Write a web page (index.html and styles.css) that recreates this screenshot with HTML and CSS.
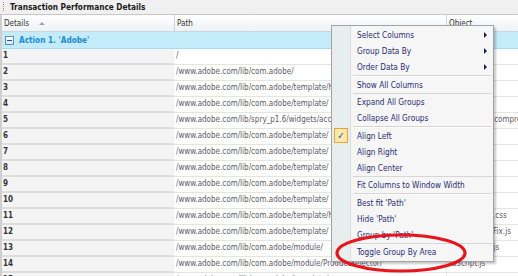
FILE: index.html
```html
<!DOCTYPE html>
<html>
<head>
<meta charset="utf-8">
<link rel="stylesheet" href="styles.css">
</head>
<body>
<div class="panel">
  <div class="titlebar"><span class="grip"></span><span class="title">Transaction Performance Details</span></div>
  <div class="grid">
    <div class="row hdr">
      <div class="c1">Details <span class="sort"></span></div>
      <div class="c2">Path</div>
      <div class="c3">Object</div>
    </div>
    <div class="group"><span class="minus"></span><span class="gtext">Action 1. 'Adobe'</span></div>
    <div class="row"><div class="c1">1</div><div class="c2">/</div><div class="c3"></div></div>
    <div class="row"><div class="c1">2</div><div class="c2">/www.adobe.com/lib/com.adobe/</div><div class="c3"></div></div>
    <div class="row"><div class="c1">3</div><div class="c2">/www.adobe.com/lib/com.adobe/template/homepage/</div><div class="c3"></div></div>
    <div class="row"><div class="c1">4</div><div class="c2">/www.adobe.com/lib/com.adobe/template/</div><div class="c3"></div></div>
    <div class="row"><div class="c1">5</div><div class="c2">/www.adobe.com/lib/spry_p1.6/widgets/accordion/</div><div class="c3">UIAccordion.compressed.js</div></div>
    <div class="row"><div class="c1">6</div><div class="c2">/www.adobe.com/lib/com.adobe/template/</div><div class="c3"></div></div>
    <div class="row"><div class="c1">7</div><div class="c2">/www.adobe.com/lib/com.adobe/template/</div><div class="c3"></div></div>
    <div class="row"><div class="c1">8</div><div class="c2">/www.adobe.com/lib/com.adobe/template/</div><div class="c3"></div></div>
    <div class="row"><div class="c1">9</div><div class="c2">/www.adobe.com/lib/com.adobe/template/</div><div class="c3"></div></div>
    <div class="row"><div class="c1">10</div><div class="c2">/www.adobe.com/lib/com.adobe/template/</div><div class="c3"></div></div>
    <div class="row"><div class="c1">11</div><div class="c2">/www.adobe.com/lib/com.adobe/template/homepage/</div><div class="c3">layout_main.css</div></div>
    <div class="row"><div class="c1">12</div><div class="c2">/www.adobe.com/lib/com.adobe/template/</div><div class="c3">jquery.iepngFix.js</div></div>
    <div class="row"><div class="c1">13</div><div class="c2">/www.adobe.com/lib/com.adobe/module/</div><div class="c3">moduleutils.js</div></div>
    <div class="row"><div class="c1">14</div><div class="c2">/www.adobe.com/lib/com.adobe/module/ProductSelector/</div><div class="c3">raScript.js</div></div>
    <div class="row"><div class="c1">15</div><div class="c2">/www.adobe.com/lib/com.adobe/template/</div><div class="c3"></div></div>
  </div>

  <div class="menu">
    <div class="mi"><span class="ic"></span><span class="tx">Select Columns</span><span class="arr"></span></div>
    <div class="mi"><span class="ic"></span><span class="tx">Group Data By</span><span class="arr"></span></div>
    <div class="mi"><span class="ic"></span><span class="tx">Order Data By</span><span class="arr"></span></div>
    <div class="sep"></div>
    <div class="mi"><span class="ic"></span><span class="tx">Show All Columns</span></div>
    <div class="sep"></div>
    <div class="mi"><span class="ic"></span><span class="tx">Expand All Groups</span></div>
    <div class="mi"><span class="ic"></span><span class="tx">Collapse All Groups</span></div>
    <div class="sep"></div>
    <div class="mi"><span class="ic"><span class="chk">✓</span></span><span class="tx">Align Left</span></div>
    <div class="mi"><span class="ic"></span><span class="tx">Align Right</span></div>
    <div class="mi"><span class="ic"></span><span class="tx">Align Center</span></div>
    <div class="sep"></div>
    <div class="mi"><span class="ic"></span><span class="tx">Fit Columns to Window Width</span></div>
    <div class="sep"></div>
    <div class="mi"><span class="ic"></span><span class="tx">Best fit 'Path'</span></div>
    <div class="mi"><span class="ic"></span><span class="tx">Hide 'Path'</span></div>
    <div class="mi"><span class="ic"></span><span class="tx">Group by 'Path'</span></div>
    <div class="sep"></div>
    <div class="mi"><span class="ic"></span><span class="tx">Toggle Group By Area</span></div>
  </div>

  <svg class="ring" width="136" height="42" viewBox="0 0 136 42">
    <ellipse cx="67" cy="20" rx="64" ry="18" fill="none" stroke="#e8141b" stroke-width="3.2"/>
  </svg>
</div>
</body>
</html>
```

FILE: styles.css
```css
* { box-sizing: border-box; margin: 0; padding: 0; }
html, body { width: 518px; height: 276px; overflow: hidden; background: #fff; }
body { font-family: "DejaVu Sans Condensed", "DejaVu Sans", sans-serif; position: relative; }

.panel { width: 518px; height: 276px; overflow: hidden; }

.titlebar {
  height: 15px;
  background: #f0f0f0;
  border-bottom: 1px solid #c9c9c9;
  display: flex;
  align-items: center;
  padding-left: 3px;
  gap: 6px;
}
.grip {
  width: 1px;
  height: 10px;
  background: repeating-linear-gradient(#8c8c8c 0 1px, transparent 1px 2px);
}
.title { font-weight: bold; font-size: 8.2px; color: #1a1a1a; }

.grid { border-left: 2px solid #cfcfcf; }

.row { display: flex; height: 16px; font-size: 8px; line-height: 10px; }
.row .c1 {
  width: 172px;
  background: #f4f4f4;
  border-bottom: 2px solid #dedede;
  padding: 2px 0 0 1px;
  color: #333;
  font-weight: bold;
}
.row .c2 {
  width: 272px;
  background: #fff;
  border-bottom: 1px solid #e4e4e4;
  padding: 2px 0 0 2px;
  color: #5c5a68;
  white-space: nowrap;
  overflow: hidden;
}
.row .c3 {
  flex: 1;
  border-bottom: 1px solid #e4e4e4;
  border-left: 1px solid #e8e8e8;
  padding: 2px 0 0 2px;
  color: #5c5a68;
  white-space: nowrap;
  overflow: hidden;
}

.row.hdr { height: 17px; background: linear-gradient(#ffffff, #eef2f6); border-bottom: 1px solid #cdd5dc; }
.row.hdr .c1, .row.hdr .c2, .row.hdr .c3 {
  background: none;
  border-bottom: none;
  font-weight: normal;
  color: #333;
  padding: 4px 0 0 2px;
}
.row.hdr .c1 { display: flex; gap: 10px; }
.row.hdr .c2 { border-left: 1px solid #c9d4de; }
.row.hdr .c3 { border-left: 1px solid #c9d4de; }
.sort {
  width: 0; height: 0;
  margin-top: 3px;
  border-left: 3px solid transparent;
  border-right: 3px solid transparent;
  border-bottom: 3px solid #9aa3ab;
}

.group {
  height: 17px;
  background: #c3ebfa;
  border-bottom: 1px solid #a9d9ec;
  display: flex;
  align-items: center;
  gap: 5px;
  padding-left: 3px;
}
.minus {
  width: 9px; height: 9px;
  border: 1px solid #5b8fbf;
  background: linear-gradient(#ffffff, #d6e6f3);
  display: flex; align-items: center; justify-content: center;
}
.minus::after { content: ""; width: 5px; height: 1px; background: #23518a; }
.gtext { font-weight: bold; font-size: 8.2px; color: #1b8bd2; }

.menu {
  position: absolute;
  left: 331px;
  top: 25px;
  width: 163px;
  border: 1px solid #a3a3a3;
  padding: 1px 0 1px;
  background: linear-gradient(to right, #e8eded 0 18px, #d8dddd 18px 19px, #f6f6f6 19px);
  box-shadow: 2px 2px 2px rgba(0,0,0,0.22);
}
.mi { display: flex; align-items: center; height: 16px; font-size: 8.2px; line-height: 10px; color: #2b2b74; }
.mi .ic { width: 18px; height: 16px; display: flex; align-items: center; justify-content: center; }
.mi .tx { flex: 1; margin-left: 7px; }
.mi .arr {
  width: 0; height: 0;
  margin-right: 6px;
  border-top: 3px solid transparent;
  border-bottom: 3px solid transparent;
  border-left: 3px solid #1c1c50;
}
.chk {
  width: 14px; height: 15px;
  border: 1px solid #e4a540;
  background: #fde8a8;
  color: #1d50c0;
  font-size: 10px;
  display: flex; align-items: center; justify-content: center;
}
.sep {
  height: 1.5px;
  background: linear-gradient(#d6d6d6 0 1px, #ffffff 1px);
  margin-left: 21px;
  margin-right: 1px;
}

.ring { position: absolute; left: 334px; top: 233px; }
```
